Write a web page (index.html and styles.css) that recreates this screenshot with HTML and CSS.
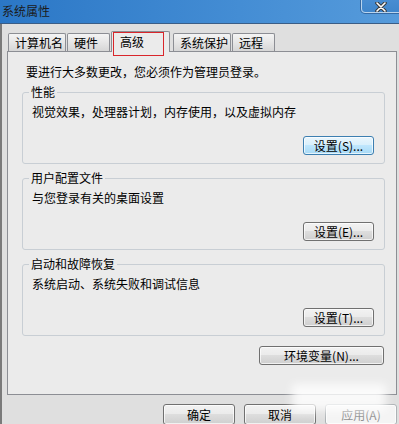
FILE: index.html
```html
<!DOCTYPE html>
<html lang="zh-CN">
<head>
    <meta charset="UTF-8">
    <title>系统属性</title>
    <link rel="stylesheet" href="styles.css">
</head>
<body>
    <div class="window">
        <div class="titlebar">
            <span class="title">系统属性</span>
            <div class="close">
                <svg width="12" height="10" viewBox="0 0 12 10">
                    <path d="M2 1 L10 9 M10 1 L2 9" stroke="#3a3a3a" stroke-width="3.6" stroke-linecap="round"/>
                    <path d="M2 1 L10 9 M10 1 L2 9" stroke="#ffffff" stroke-width="1.6" stroke-linecap="round"/>
                </svg>
            </div>
        </div>

        <div class="content">
            <div class="tabs">
                <div class="tab">计算机名</div>
                <div class="tab">硬件</div>
                <div class="tab active">高级</div>
                <div class="tab">系统保护</div>
                <div class="tab">远程</div>
            </div>

            <div class="panel">
                <p class="note">要进行大多数更改，您必须作为管理员登录。</p>

                <fieldset class="group">
                    <legend>性能</legend>
                    <p class="desc">视觉效果，处理器计划，内存使用，以及虚拟内存</p>
                    <div class="row"><button class="btn hot">设置(S)...</button></div>
                </fieldset>

                <fieldset class="group">
                    <legend>用户配置文件</legend>
                    <p class="desc">与您登录有关的桌面设置</p>
                    <div class="row"><button class="btn">设置(E)...</button></div>
                </fieldset>

                <fieldset class="group">
                    <legend>启动和故障恢复</legend>
                    <p class="desc">系统启动、系统失败和调试信息</p>
                    <div class="row"><button class="btn">设置(T)...</button></div>
                </fieldset>

                <div class="row env"><button class="btn wide">环境变量(N)...</button></div>
            </div>

            <div class="footer">
                <button class="btn foot">确定</button>
                <button class="btn foot">取消</button>
                <button class="btn foot" disabled>应用(A)</button>
            </div>
        </div>

        <div class="mark"></div>
        <div class="watermark"></div>
    </div>
</body>
</html>
```

FILE: styles.css
```css
body {
    margin: 0;
    font-family: "Noto Sans CJK SC", "Liberation Sans", sans-serif;
    font-size: 12px;
    color: #000;
}

.window {
    width: 399px;
    height: 424px;
    background: #dfdfdf;
    position: relative;
    overflow: hidden;
}

.titlebar {
    height: 23px;
    background: linear-gradient(to right, #2b77c6, #448dd4 60%, #569bdb);
    border-bottom: 1px solid #3a5d86;
    position: relative;
}

.title {
    display: block;
    padding-left: 2px;
    line-height: 21px;
    color: #1b1b1b;
}

.close {
    position: absolute;
    top: -4px;
    right: -6px;
    width: 44px;
    height: 17px;
    border: 1px solid #b9d4ee;
    border-radius: 0 0 0 4px;
    box-shadow: 0 0 0 1px #3569a3;
    background: linear-gradient(#4a8ed3, #3f86cc);
    display: flex;
    justify-content: center;
    align-items: flex-end;
    padding-right: 4px;
    box-sizing: border-box;
}

.content {
    height: 400px;
    border-left: 2px solid #7a7a7a;
    padding: 9px 0 0 5px;
    box-sizing: border-box;
}

/* 탭 */
.tabs {
    display: flex;
    height: 18px;
    padding-left: 1px;
    align-items: flex-end;
}

.tab {
    height: 17px;
    min-width: 33px;
    padding: 0 2px 0 6px;
    margin-right: 1px;
    line-height: 17px;
    border: 1px solid #8c8e94;
    border-bottom: none;
    border-radius: 2px 2px 0 0;
    background: linear-gradient(#f4f4f4, #e6e6e6 50%, #d6d6d6);
}

.tab.active {
    position: relative;
    z-index: 1;
    height: 20px;
    margin-bottom: -1px;
    margin-right: 3px;
    padding: 0 16px 0 8px;
    line-height: 20px;
    background: #ebebeb;
}

/* 빨간 표시 상자 */
.mark {
    position: absolute;
    z-index: 5;
    left: 113px;
    top: 32px;
    width: 49px;
    height: 22px;
    border: 1px solid #d9262b;
}

.panel {
    width: 390px;
    height: 344px;
    box-sizing: border-box;
    border: 1px solid #8c8e94;
    background: #ebebeb;
    padding: 13px 11px 0 14px;
}

.note {
    margin: 0 0 6px 4px;
    line-height: 14px;
}

.group {
    margin: 0 0 7px;
    padding: 6px 10px 8px 9px;
    border: 1px solid #c8ced4;
    border-radius: 3px;
    min-width: 0;
}

.group legend {
    padding: 0 2px;
    margin-left: -3px;
    line-height: 14px;
}

.desc {
    margin: 0;
    line-height: 14px;
}

.row {
    display: flex;
    justify-content: flex-end;
    margin-top: 17px;
}

.env {
    margin-top: 10px;
    padding-right: 1px;
}

.btn {
    width: 71px;
    height: 19px;
    padding: 0;
    font-family: inherit;
    font-size: 12px;
    line-height: 17px;
    color: #000;
    border: 1px solid #707070;
    border-radius: 3px;
    background: linear-gradient(#f2f2f2, #ebebeb 45%, #dddddd 50%, #cfcfcf);
    box-shadow: inset 0 0 0 1px rgba(255, 255, 255, 0.7);
}

.btn.hot {
    border-color: #3c7fb1;
    background: linear-gradient(#eaf6fd, #d9f0fc 45%, #bee6fd 50%, #a7d9f5);
}

.btn.wide {
    width: 125px;
}

.footer {
    display: flex;
    justify-content: flex-end;
    gap: 9px;
    padding-right: 2px;
    margin-top: 9px;
}

.btn.foot {
    width: 72px;
    height: 21px;
}

.btn:disabled {
    color: #8d8d8d;
    border-color: #adb2b5;
    background: #f4f4f4;
}

.watermark {
    position: absolute;
    left: 292px;
    top: 384px;
    width: 94px;
    height: 27px;
    background: rgba(255, 255, 255, 0.8);
    filter: blur(5px);
}
```
